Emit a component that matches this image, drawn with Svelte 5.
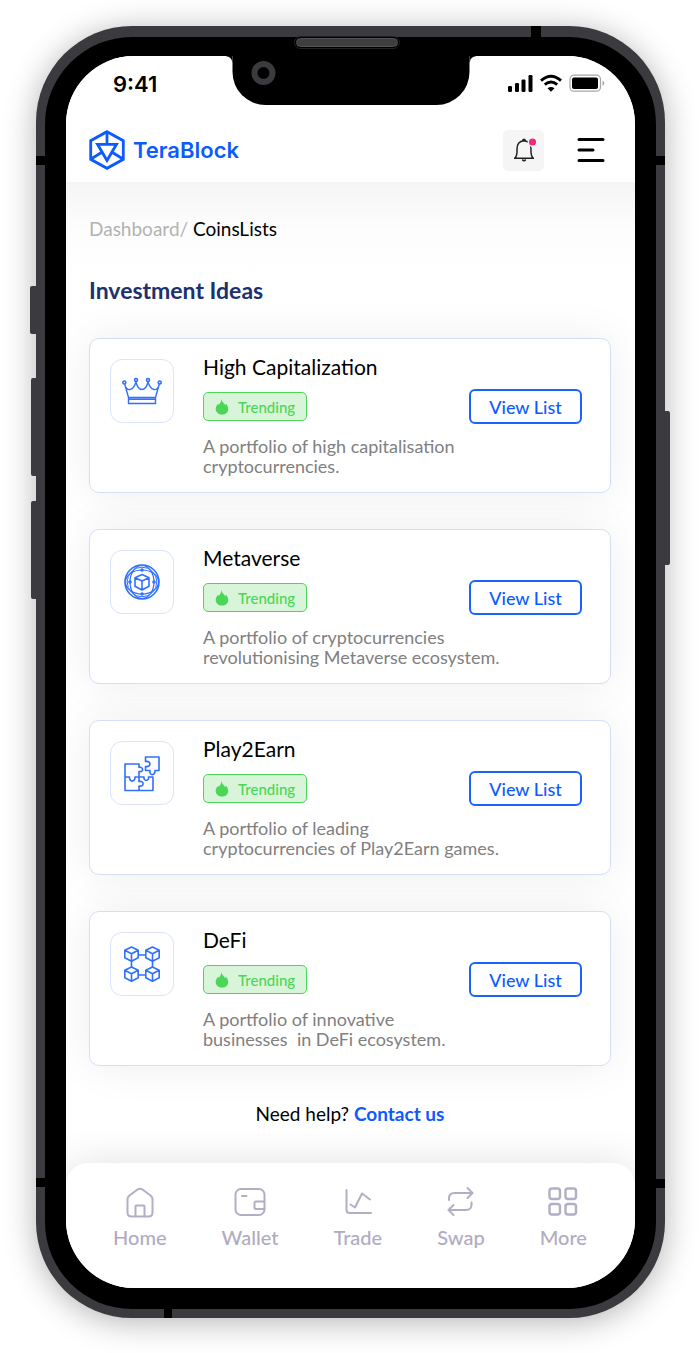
<script>
  const ideas = [
    { icon: 'crown', title: 'High Capitalization', text: 'A portfolio of high capitalisation\ncryptocurrencies.' },
    { icon: 'globe', title: 'Metaverse', text: 'A portfolio of cryptocurrencies\nrevolutionising Metaverse ecosystem.' },
    { icon: 'puzzle', title: 'Play2Earn', text: 'A portfolio of leading\ncryptocurrencies of Play2Earn games.' },
    { icon: 'blocks', title: 'DeFi', text: 'A portfolio of innovative\nbusinesses  in DeFi ecosystem.' }
  ];
  const tabs = ['Home', 'Wallet', 'Trade', 'Swap', 'More'];
  const cubes = [[8, 8], [29, 8], [8, 28], [29, 28]];
</script>

<div class="page">
  <div class="phone">
    <i class="key mute"></i><i class="key up"></i><i class="key down"></i><i class="key power"></i>
    <i class="band lt"></i><i class="band rt"></i><i class="band lb"></i><i class="band rb"></i>
    <i class="band top"></i><i class="band bottom"></i>
    <div class="bezel">
      <i class="speaker"></i>
      <div class="screen">
        <div class="notch"><i class="camera"></i></div>

        <header>
          <div class="status">
            <span class="time">9:41</span>
            <svg width="98" height="20" viewBox="0 0 98 20" aria-hidden="true">
              <g fill="#000">
                <rect x="1" y="12" width="4" height="6" rx="1.2" /><rect x="8" y="9" width="4" height="9" rx="1.2" />
                <rect x="14.500" y="5.500" width="4" height="12.500" rx="1.2" /><rect x="21.500" y="1" width="4" height="17" rx="1.2" />
                <rect x="65" y="3.500" width="26" height="11.500" rx="2" />
                <path d="M40.500 14.300 44 17.700 47.500 14.300Q44 11.800 40.500 14.300Z" />
              </g>
              <g fill="none" stroke="#000" stroke-width="2.900"><path d="M34 6.600Q44-2 54 6.600" /><path d="M37.800 10.700Q44 5.500 50.200 10.700" /></g>
              <rect x="63" y="1.200" width="30.500" height="16" rx="4" fill="none" stroke="#a6a6a6" stroke-width="1.200" />
              <path d="M95.500 6.500Q99 9 95.500 12Z" fill="#a6a6a6" />
            </svg>
          </div>
          <div class="bar">
            <a class="brand" href="#home">
              <svg width="36" height="40" viewBox="0 0 36 40" fill="none" stroke="#0d5bff" stroke-width="2.800" aria-hidden="true">
                <path d="M18 1.700 34.300 10.700V29.300L18 38.300 1.700 29.300V10.700Z" />
                <path d="M18 2V14M8.500 14.300H27.500L18 30.500ZM2 29 12.500 22.500M34 29 23.500 22.500" />
              </svg>
              <span>TeraBlock</span>
            </a>
            <button class="bell" aria-label="Notifications">
              <svg width="24" height="26" viewBox="0 0 24 26" fill="none" aria-hidden="true">
                <path d="M2 21.300H22M3 21C5.500 18.500 5 15.500 5 12C5 7 7.500 4 12 3.700C16.500 4 19 7 19 12C19 15.500 18.500 18.500 21 21M10.500 3.700Q12 .8 13.500 3.700M10.300 22.500Q12 25 13.700 22.500" stroke="#222" stroke-width="1.500" />
                <circle cx="20.500" cy="5" r="5" fill="#f5f5f5" /><circle cx="20.500" cy="5" r="3.600" fill="#f02a80" />
              </svg>
            </button>
            <button class="menu" aria-label="Menu">
              <svg width="28" height="26" viewBox="0 0 28 26" stroke="#000" stroke-width="3" stroke-linecap="round" aria-hidden="true"><path d="M2 2.500H26M2 13H16M2 23.500H26" /></svg>
            </button>
          </div>
        </header>

        <main>
          <nav class="crumbs" aria-label="Breadcrumb"><a href="#dashboard">Dashboard/</a> <span>CoinsLists</span></nav>
          <h1>Investment Ideas</h1>
          <div class="cards">
            {#each ideas as idea}
              <article>
                <div class="tile">
                  <svg width="40" height="40" viewBox="0 0 40 40" fill="none" stroke="#2f70ff" stroke-width="1.600" stroke-linejoin="round" aria-hidden="true">
                    {#if idea.icon === 'crown'}
                      <circle cx="2.300" cy="11.500" r="1.500" /><circle cx="14" cy="9" r="1.500" /><circle cx="26" cy="9" r="1.500" /><circle cx="37.700" cy="11.500" r="1.500" />
                      <path d="M2.800 13.300 6.500 26.500H33.500L37.200 13.300C36.500 17 34.500 19 32 18.500C28.500 18 27 14 26 11C25 15 23 18.500 20 18.500C17 18.500 15 15 14 11C13 14 11.500 18 8 18.500C5.500 19 3.500 17 2.800 13.300ZM6.500 26.500V32.500H33.500V26.500M6.500 28.300H33.500" stroke-width="1.400" />
                    {:else if idea.icon === 'globe'}
                      <circle cx="20" cy="20" r="17" /><circle cx="20" cy="20" r="14.800" stroke-width="1" />
                      <ellipse cx="20" cy="20" rx="16.500" ry="12" stroke-width="1.200" /><ellipse cx="20" cy="20" rx="12" ry="16.500" stroke-width="1.200" />
                      <path d="M20 12.500 27 15.800V24.200L20 28 13 24.200V15.800ZM13 15.800 20 19 27 15.800M20 19V28" />
                      <g fill="#2f70ff" stroke="none"><circle cx="20" cy="8" r="1.800" /><circle cx="20" cy="32" r="1.800" /><circle cx="8" cy="20" r="1.800" /><circle cx="32" cy="20" r="1.800" /></g>
                    {:else if idea.icon === 'puzzle'}
                      <path d="M3 11H17V14.500C21 13 22.500 19.500 17 18.500V24H13C13.500 29.500 7 29.500 7.500 24H3ZM3 24V37.500H17V33C22.500 34 22.500 27.500 17 28.500V24M17 24H22C21 28.500 27.500 28.500 26.500 24H31V37.500H17" />
                      <path d="M23.500 4H37V17.500H33C33.500 23 27 23 28 17.500H23.500V13.500C29.500 14.500 29.500 7.500 23.500 8.500Z" />
                    {:else}
                      {#each cubes as [x, y]}
                        <path transform="translate({x + 1.5} {y + 2})" d="M0-7 6.700-3.800V3.800L0 7.200-6.700 3.800V-3.800ZM-6.700-3.800 0-.3 6.700-3.800M0-.3V7.200" />
                      {/each}
                      <path d="M16.200 11H23.800M16.200 31H23.800M9.500 17.200V23M30.500 17.200V23" />
                    {/if}
                  </svg>
                </div>
                <h2>{idea.title}</h2>
                <span class="badge">
                  <svg width="14" height="16" viewBox="0 0 14 16" fill="#4cd657" aria-hidden="true"><path d="M6.200 0C6.800 3 9.500 4 10 6.300L11 4.800C12.200 6.200 13.200 8 13.200 10C13.200 13.500 10.500 15.500 7 15.500S.7 13.500 .7 10C.7 7.800 1.800 6.200 3.300 4.800L3.800 6C4.900 4.500 6.400 3 6.200 0Z" /></svg>
                  Trending
                </span>
                <button class="view">View List</button>
                <p>{idea.text}</p>
              </article>
            {/each}
          </div>
          <div class="help">Need help? <a href="#contact">Contact us</a></div>
        </main>

        <nav class="tabs" aria-label="Main">
          {#each tabs as tab}
            <a href="#{tab}">
              <svg width="32" height="32" viewBox="0 0 32 32" fill="none" stroke="#b3adc6" stroke-width="2" stroke-linecap="round" stroke-linejoin="round" aria-hidden="true">
                {#if tab === 'Home'}
                  <path d="M3.500 13.500Q3.500 11 5.500 9.500L13.500 3.500Q16 1.800 18.500 3.500L26.500 9.500Q28.500 11 28.500 13.500V26.500Q28.500 30.500 24.500 30.500H7.500Q3.500 30.500 3.500 26.500ZM11.500 30V20.500Q11.500 19.500 12.500 19.500H19.500Q20.500 19.500 20.500 20.500V30" />
                {:else if tab === 'Wallet'}
                  <rect x="1.500" y="3" width="29" height="26" rx="5.500" /><path d="M8 10H12.500M30 15.500H22Q20.500 15.500 20.500 17V21.500Q20.500 23 22 23H30" />
                {:else if tab === 'Trade'}
                  <path d="M4.500 4V24Q4.500 27 7.500 27H29M8.500 18.500 13 21.500 20 7.500 28 13.500" />
                {:else if tab === 'Swap'}
                  <path d="M4 14V12.500Q4 7 9.500 7H27M22.500 2 27.500 7 22.500 12M26.500 16.500V18.500Q26.500 24 21 24H4M8.500 19 3.500 24 8.500 29" />
                {:else}
                  <g stroke-width="2.400"><rect x="2.500" y="2.500" width="10.500" height="10.500" rx="2.500" /><rect x="18.500" y="2.500" width="10.500" height="10.500" rx="2.500" /><rect x="2.500" y="18" width="10.500" height="10.500" rx="2.500" /><rect x="18.500" y="18" width="10.500" height="10.500" rx="2.500" /></g>
                {/if}
              </svg>
              {tab}
            </a>
          {/each}
        </nav>
      </div>
    </div>
  </div>
</div>

<style>
  :global(body) { background: #fff; }
  .page { padding: 26px 35px 35px 36px; font-family: Lato, "Liberation Sans", sans-serif; color: #000; }
  .page * { box-sizing: border-box; }
  a { text-decoration: none; color: inherit; }
  button { font: inherit; cursor: pointer; border: 0; padding: 0; background: none; }
  h1, h2, p { margin: 0; }
  svg { display: block; flex: none; }

  .phone { position: relative; padding: 11px 9px 9px; border-radius: 96px; background: #3b3a3f; box-shadow: 0 4px 32px rgba(0, 0, 0, .3); }
  .bezel { position: relative; padding: 19px 21px 21px; border-radius: 87px; background: #000; }
  .screen { position: relative; overflow: hidden; border-radius: 68px; background: #fff; }

  .key { position: absolute; width: 5px; background: #3b3a3f; }
  .mute { left: -6px; top: 260px; width: 6px; height: 48px; border-radius: 2px 0 0 2px; }
  .up { left: -5px; top: 352px; height: 98px; border-radius: 2px 0 0 2px; }
  .down { left: -5px; top: 475px; height: 98px; border-radius: 2px 0 0 2px; }
  .power { right: -5px; top: 385px; height: 154px; border-radius: 0 2px 2px 0; }
  .band { position: absolute; width: 10px; height: 9px; background: #000; }
  .lt { left: 0; top: 130px; }
  .rt { right: 0; top: 130px; }
  .lb { left: 0; bottom: 131px; }
  .rb { right: 0; bottom: 130px; }
  .band.top { right: 124px; top: 0; height: 12px; }
  .band.bottom { left: 128px; bottom: 0; width: 8px; height: 10px; }
  .speaker { position: absolute; top: 1px; right: 258px; width: 102px; height: 9px; border: 1px solid #555; border-radius: 5px; background: radial-gradient(circle, #777 30%, #222 60%) 0 0 / 2px 2px; outline: 1px solid #222; outline-offset: 1px; }

  .notch { position: absolute; z-index: 1; top: 0; left: 50%; width: 237px; height: 49px; transform: translateX(-50%); background: #000; border-radius: 0 0 33px 33px; }
  .notch::before, .notch::after { content: ""; position: absolute; top: 0; width: 6px; height: 6px; }
  .notch::before { right: 100%; background: radial-gradient(circle at 0 100%, transparent 5px, #000 6px); }
  .notch::after { left: 100%; background: radial-gradient(circle at 100% 100%, transparent 5px, #000 6px); }
  .camera { position: absolute; left: 19px; top: 5px; width: 24px; height: 24px; border: 6px solid #3b3a3f; border-radius: 50%; }

  header { background: #fff; }
  .status { display: flex; align-items: center; justify-content: space-between; padding: 12px 30px 18px 47px; }
  .time { font: 600 22px/32px Inter, sans-serif; }
  .bar { display: flex; align-items: center; height: 64px; padding: 0 30px 0 23px; }
  .brand { display: flex; align-items: center; gap: 8px; margin-right: auto; color: #0d5bff; font: 600 22px/28px Inter, sans-serif; }
  .bell { display: grid; place-items: center; width: 41px; height: 41px; border-radius: 5px; background: #f5f5f5; }
  .menu { margin-left: 33px; }

  main { padding: 35px 24px 37px 23px; background: linear-gradient(#f5f5f5, #fdfdfd 50px, #fff 100px); }
  .crumbs { font-size: 19px; line-height: 24px; }
  .crumbs a { color: #b3b3b3; }
  h1 { margin: 34px 0 33px; font-size: 23px; line-height: 30px; font-weight: 700; color: #20306f; }
  .cards { display: grid; gap: 36px; }
  article { display: grid; grid-template-columns: 64px 1fr auto; grid-template-rows: 24px 35px auto; gap: 9px 29px; padding: 17px 28px 16px 20px; border: 1px solid #d5def8; border-radius: 10px; background: #fff; box-shadow: 0 0 45px rgba(0, 0, 0, .07); }
  .tile { grid-row: 1 / 4; display: grid; place-items: center; width: 64px; height: 64px; margin-top: 3px; border: 1px solid #dce3fa; border-radius: 12px; }
  h2 { grid-column: 2 / 4; font-size: 21px; line-height: 22px; font-weight: 400; }
  .badge { grid-column: 2; justify-self: start; align-self: center; display: flex; align-items: center; gap: 9px; height: 29px; padding: 0 11px; border: 1px solid #4cd657; border-radius: 5px; background: #d8f5da; color: #4cd657; font-size: 15px; font-weight: 500; }
  .view { width: 113px; height: 35px; border: 2px solid #1a63ff; border-radius: 6px; background: #fff; color: #0d5bff; font-size: 18px; font-weight: 500; }
  p { grid-column: 2 / 4; margin-top: 3px; font-size: 18px; line-height: 20px; color: #808080; white-space: pre-wrap; }
  .help { margin-top: 36px; font-size: 19px; line-height: 24px; text-align: center; }
  .help a { color: #0d5bff; font-weight: 700; }

  .tabs { position: relative; display: flex; justify-content: space-between; padding: 23px 48px 37px 47px; border-radius: 22px 22px 0 0; background: #fff; box-shadow: 0 0 40px rgba(0, 0, 0, .12); }
  .tabs a { display: flex; flex-direction: column; align-items: center; gap: 5px; font-size: 20px; line-height: 28px; color: #b0abc2; font-weight: 500; }
</style>
